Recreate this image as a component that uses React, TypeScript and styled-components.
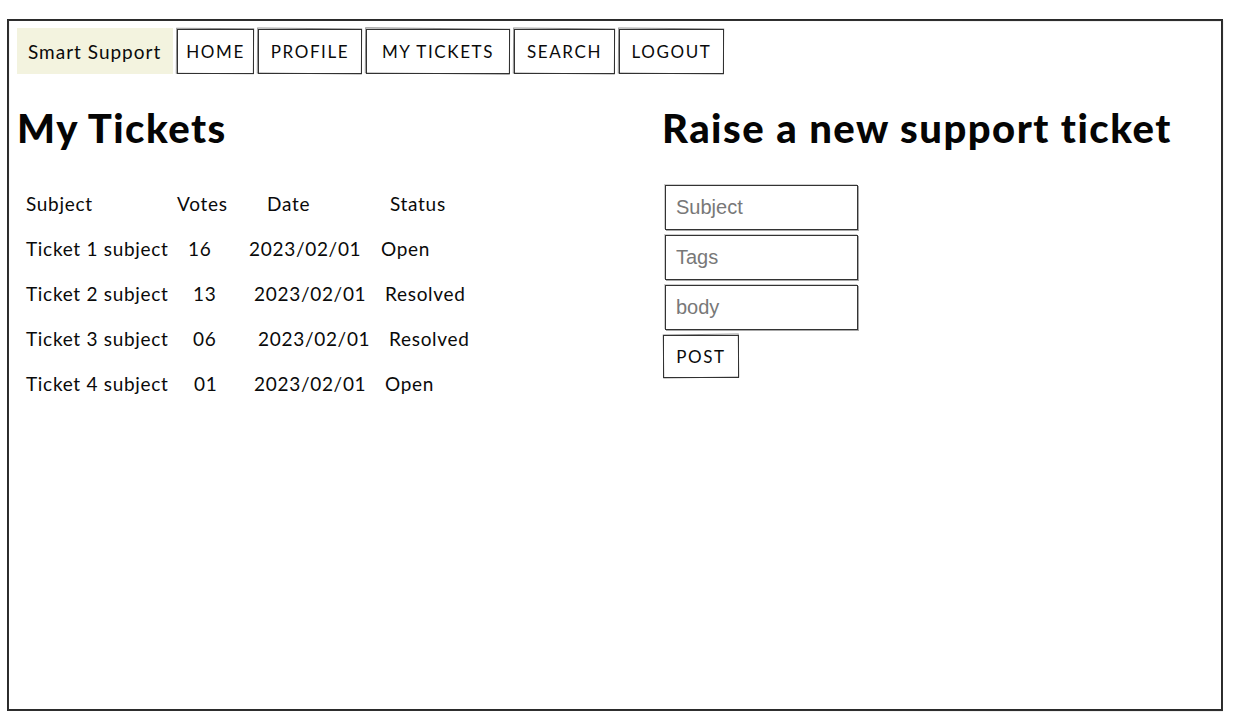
import React from "react";
import styled, { createGlobalStyle } from "styled-components";

const Global = createGlobalStyle`
  html, body { margin: 0; padding: 0; background: #fff; }
  body { font-family: "Lato", "Noto Sans", sans-serif; color: #111; }
  * { box-sizing: border-box; }
`;

const Page = styled.div`
  width: 1234px;
  height: 716px;
  padding: 19px 11px 5px 7px;
`;

const Frame = styled.div`
  position: relative;
  height: 100%;
  border: 2px solid #2a2a2a;
  padding: 7px 8px 0 8px;
  display: flex;
  flex-direction: column;
  &::after {
    content: "";
    position: absolute;
    inset: -1px -2px -2px -1px;
    border: 1px solid rgba(60, 60, 60, 0.35);
    transform: rotate(0.03deg);
    pointer-events: none;
  }
`;

const Nav = styled.nav`
  display: flex;
  align-items: stretch;
  gap: 4px;
  height: 46px;
`;

const Brand = styled.div`
  display: flex;
  align-items: center;
  width: 156px;
  padding-left: 11px;
  background: #f3f3df;
  font-size: 19px;
  color: #0a0a0a;
  letter-spacing: 1px;
`;

const NavButton = styled.button<{ $w: number }>`
  position: relative;
  width: ${(p) => p.$w}px;
  height: 45px;
  margin-top: 1px;
  background: #fff;
  border: 1.5px solid #333;
  font-family: "Lato", "Noto Sans", sans-serif;
  font-size: 17px;
  letter-spacing: 1.6px;
  text-transform: uppercase;
  color: #0a0a0a;
  padding: 0;
  cursor: pointer;
  &::before {
    content: "";
    position: absolute;
    inset: -2px -1px -1px -2px;
    border: 1px solid rgba(50, 50, 50, 0.55);
    transform: rotate(0.5deg);
    pointer-events: none;
  }
`;

const Main = styled.main`
  display: grid;
  grid-template-columns: 645px 1fr;
  margin-top: 31px;
`;

const Column = styled.section`
  display: flex;
  flex-direction: column;
`;

const Heading = styled.h1`
  margin: 0;
  font-family: "Lato", "Noto Sans", sans-serif;
  font-weight: 900;
  font-size: 40px;
  line-height: 46px;
  letter-spacing: 1.5px;
  color: #050505;
`;

const Table = styled.div`
  margin-top: 30px;
  padding-left: 9px;
  display: flex;
  flex-direction: column;
`;

const Row = styled.div<{ $cols: string }>`
  display: grid;
  grid-template-columns: ${(p) => p.$cols};
  height: 45px;
  align-items: center;
  font-size: 19px;
  letter-spacing: 0.7px;
  white-space: nowrap;
  color: #0a0a0a;
`;

const Form = styled.form`
  margin-top: 34px;
  padding-left: 3px;
  display: flex;
  flex-direction: column;
  align-items: flex-start;
  gap: 5px;
`;

const Field = styled.input`
  position: relative;
  width: 193px;
  height: 45px;
  border: 1.5px solid #333;
  padding: 0 10px;
  font-family: "Liberation Sans", Arial, sans-serif;
  font-size: 20px;
  color: #222;
  outline: none;
  box-shadow: 1px 1px 0 rgba(60, 60, 60, 0.45), -1px -1px 0 rgba(60, 60, 60, 0.25);
  &::placeholder { color: #787878; }
`;

const PostButton = styled.button`
  position: relative;
  margin-left: -2px;
  width: 76px;
  height: 43px;
  background: #fff;
  border: 1.5px solid #333;
  font-family: "Lato", "Noto Sans", sans-serif;
  font-size: 17px;
  letter-spacing: 1.6px;
  color: #0a0a0a;
  padding: 0;
  &::before {
    content: "";
    position: absolute;
    inset: -2px -1px -1px -1px;
    border: 1px solid rgba(50, 50, 50, 0.55);
    transform: rotate(-0.8deg);
    pointer-events: none;
  }
`;

const navItems: [string, number][] = [
  ["Home", 77],
  ["Profile", 104],
  ["My Tickets", 144],
  ["Search", 101],
  ["Logout", 105],
];

const cols = (v: number, d: number, s: number) =>
  `${v - 26}px ${d - v}px ${s - d}px 1fr`;

const tickets = [
  { subject: "Ticket 1 subject", votes: "16", date: "2023/02/01", status: "Open", c: cols(188, 249, 381) },
  { subject: "Ticket 2 subject", votes: "13", date: "2023/02/01", status: "Resolved", c: cols(193, 254, 385) },
  { subject: "Ticket 3 subject", votes: "06", date: "2023/02/01", status: "Resolved", c: cols(193, 258, 389) },
  { subject: "Ticket 4 subject", votes: "01", date: "2023/02/01", status: "Open", c: cols(194, 254, 385) },
];

export default function App() {
  return (
    <Page>
      <Global />
      <Frame>
        <Nav>
          <Brand>Smart Support</Brand>
          {navItems.map(([label, w]) => (
            <NavButton key={label} $w={w}>
              {label}
            </NavButton>
          ))}
        </Nav>
        <Main>
          <Column>
            <Heading>My Tickets</Heading>
            <Table>
              <Row $cols={cols(177, 267, 390)}>
                <span>Subject</span>
                <span>Votes</span>
                <span>Date</span>
                <span>Status</span>
              </Row>
              {tickets.map((t) => (
                <Row key={t.subject} $cols={t.c}>
                  <span>{t.subject}</span>
                  <span>{t.votes}</span>
                  <span>{t.date}</span>
                  <span>{t.status}</span>
                </Row>
              ))}
            </Table>
          </Column>
          <Column>
            <Heading>Raise a new support ticket</Heading>
            <Form onSubmit={(e) => e.preventDefault()}>
              <Field placeholder="Subject" />
              <Field placeholder="Tags" />
              <Field placeholder="body" />
              <PostButton type="submit">POST</PostButton>
            </Form>
          </Column>
        </Main>
      </Frame>
    </Page>
  );
}
